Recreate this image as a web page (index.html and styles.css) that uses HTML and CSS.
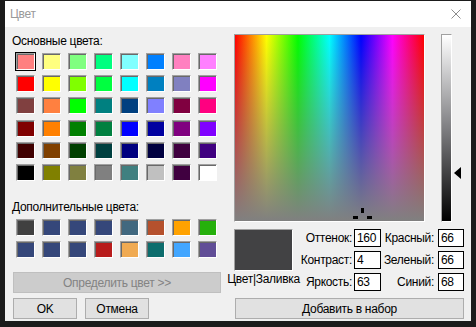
FILE: index.html
```html
<!DOCTYPE html>
<html>
  <head>
    <meta charset="UTF-8" />
    <title>Цвет</title>
    <link rel="stylesheet" href="styles.css">
  </head>
  <body>
    <div class="dialog">
      <div class="titlebar">
        <span class="title">Цвет</span>
        <svg class="close" width="10" height="10" viewBox="0 0 10 10">
          <path d="M0.5 0.5 L9.5 9.5 M9.5 0.5 L0.5 9.5" stroke="#8c8c8c" stroke-width="1" fill="none" />
        </svg>
      </div>

      <div class="content">
        <div class="left">
          <p class="label">Основные цвета:</p>
          <div id="basic" class="swatches"></div>

          <p class="label custom-label">Дополнительные цвета:</p>
          <div id="custom" class="swatches"></div>

          <button class="btn define" disabled>Определить цвет &gt;&gt;</button>
          <div class="buttons">
            <button class="btn">OK</button>
            <button class="btn">Отмена</button>
          </div>
        </div>

        <div class="right">
          <div class="picker">
            <div class="spectrum">
              <!-- crosshair, bottom part is cut by the edge -->
              <svg class="cross" width="19" height="11" viewBox="0 0 19 11">
                <rect x="8" y="0" width="3" height="5" fill="#000" />
                <rect x="0" y="8" width="5" height="3" fill="#000" />
                <rect x="14" y="8" width="5" height="3" fill="#000" />
              </svg>
            </div>
            <div class="lum"></div>
            <div class="arrow"></div>
          </div>

          <div class="fields">
            <div class="preview-col">
              <div class="preview"></div>
              <span>Цвет|Заливка</span>
            </div>
            <span class="field-label">Оттенок:</span>
            <input class="field" value="160" />
            <span class="field-label second">Красный:</span>
            <input class="field" value="66" />

            <span class="field-label">Контраст:</span>
            <input class="field" value="4" />
            <span class="field-label second">Зеленый:</span>
            <input class="field" value="66" />

            <span class="field-label">Яркость:</span>
            <input class="field" value="63" />
            <span class="field-label second">Синий:</span>
            <input class="field" value="68" />
          </div>

          <button class="btn add">Добавить в набор</button>
        </div>
      </div>
    </div>

    <script>
      var basicColors = [
        "#ff8080", "#ffff80", "#80ff80", "#00ff80", "#80ffff", "#0080ff", "#ff80c0", "#ff80ff",
        "#ff0000", "#ffff00", "#80ff00", "#00ff40", "#00ffff", "#0080c0", "#8080c0", "#ff00ff",
        "#804040", "#ff8040", "#00ff00", "#008080", "#004080", "#8080ff", "#800040", "#ff0080",
        "#800000", "#ff8000", "#008000", "#008040", "#0000ff", "#0000a0", "#800080", "#8000ff",
        "#400000", "#804000", "#004000", "#004040", "#000080", "#000040", "#400040", "#400080",
        "#000000", "#808000", "#808040", "#808080", "#408080", "#c0c0c0", "#400040", "#ffffff"
      ];
      var customColors = [
        "#404040", "#35477a", "#35477a", "#35477a", "#41687f", "#b5512d", "#ffa200", "#26b00c",
        "#35477a", "#35477a", "#35477a", "#b81c1c", "#f0aa52", "#0d6d6d", "#42a6ff", "#614e97"
      ];

      function fillSwatches(id, colors, selected) {
        var box = document.getElementById(id);
        for (var i = 0; i < colors.length; i++) {
          var sw = document.createElement("div");
          sw.className = "swatch" + (i === selected ? " selected" : "");
          sw.style.backgroundColor = colors[i];
          box.appendChild(sw);
        }
      }

      fillSwatches("basic", basicColors, 0);
      fillSwatches("custom", customColors, -1);
    </script>
  </body>
</html>
```

FILE: styles.css
```css
body {
  margin: 0;
  background-color: #1b1b1b;
  font-family: "Liberation Sans", Arial, sans-serif;
  font-size: 12px;
  letter-spacing: -0.3px;
  color: #000;
}

/* window */
.dialog {
  margin: 1px 5px 0 5px;
  height: 320px;
  background-color: #f0f0f0;
}

.titlebar {
  height: 26px;
  background-color: #fff;
  display: flex;
  align-items: center;
  justify-content: space-between;
  padding: 0 10px 0 5px;
}

.title {
  color: #999;
  line-height: 15px;
}

.close {
  display: block;
}

.content {
  display: flex;
  gap: 13px;
  padding: 7px 7px 0 8px;
}

/* left side: swatches and buttons */
.left {
  width: 208px;
  display: flex;
  flex-direction: column;
}

.label {
  margin: 0 0 0 -1px;
  line-height: 15px;
}

.custom-label {
  margin-top: 19px;
}

.swatches {
  display: grid;
  grid-template-columns: repeat(8, 19px);
  grid-auto-rows: 17px;
  column-gap: 7px;
  row-gap: 5.2px;
  margin: 4px 0 0 3px;
}

.swatch {
  box-sizing: border-box;
  border: 1px solid;
  border-color: #a0a0a0 #fff #fff #a0a0a0;
  box-shadow: inset 1px 1px #696969;
}

.swatch.selected {
  outline: 1px solid #000;
}

.btn {
  box-sizing: border-box;
  height: 21px;
  margin: 0;
  padding: 0;
  border: 1px solid #adadad;
  background-color: #e1e1e1;
  font: inherit;
  letter-spacing: inherit;
  color: #000;
}

.define {
  width: 208px;
  margin-top: 14px;
  background-color: #cccccc;
  border-color: #bfbfbf;
  color: #838383;
}

.buttons {
  display: flex;
  gap: 8px;
  margin-top: 5px;
}

.buttons .btn {
  width: 64px;
}

/* right side: spectrum, values */
.right {
  width: 230px;
}

.picker {
  position: relative;
  display: flex;
  gap: 16px;
  height: 188px;
}

.spectrum {
  position: relative;
  overflow: hidden;
  box-sizing: border-box;
  width: 191px;
  height: 188px;
  border: 1px solid;
  border-color: #a0a0a0 #fff #fff #a0a0a0;
  background:
    linear-gradient(to bottom, rgba(128, 128, 128, 0), #808080),
    linear-gradient(to right, #ff0000, #ffff00 16.67%, #00ff00 33.33%, #00ffff 50%, #0000ff 66.67%, #ff00ff 83.33%, #ff0000);
}

.cross {
  position: absolute;
  left: 118px;
  top: 173px;
  display: block;
}

.lum {
  box-sizing: border-box;
  width: 11px;
  height: 188px;
  border: 1px solid;
  border-color: #a0a0a0 #fff #fff #a0a0a0;
  background: linear-gradient(to bottom, #ffffff, #7f7f82 50%, #000000);
}

.arrow {
  position: absolute;
  left: 220px;
  top: 133px;
  width: 0;
  height: 0;
  border-top: 6px solid transparent;
  border-bottom: 6px solid transparent;
  border-right: 7px solid #000;
}

.fields {
  display: grid;
  grid-template-columns: 59px 61px 27px 57px 26px;
  grid-template-rows: repeat(3, 18px);
  row-gap: 4px;
  margin-top: 7px;
}

.preview-col {
  grid-row: 1 / span 3;
  display: flex;
  flex-direction: column;
  align-items: center;
}

.preview {
  box-sizing: border-box;
  width: 59px;
  height: 42px;
  background-color: #424244;
  border: 1px solid;
  border-color: #a0a0a0 #fff #fff #a0a0a0;
}

.preview-col span {
  margin-top: 1px;
  line-height: 15px;
  white-space: nowrap;
}

.field-label {
  text-align: right;
  line-height: 18px;
  padding-right: 2px;
  white-space: nowrap;
}

.field-label.second {
  padding-right: 4px;
}

.field {
  box-sizing: border-box;
  width: 100%;
  height: 18px;
  margin: 0;
  padding: 0 2px;
  border: 1px solid #000;
  background-color: #fff;
  font: inherit;
  letter-spacing: inherit;
  color: #000;
  outline: none;
}

.add {
  width: 229px;
  margin-top: 7px;
  margin-left: 1px;
}
```
